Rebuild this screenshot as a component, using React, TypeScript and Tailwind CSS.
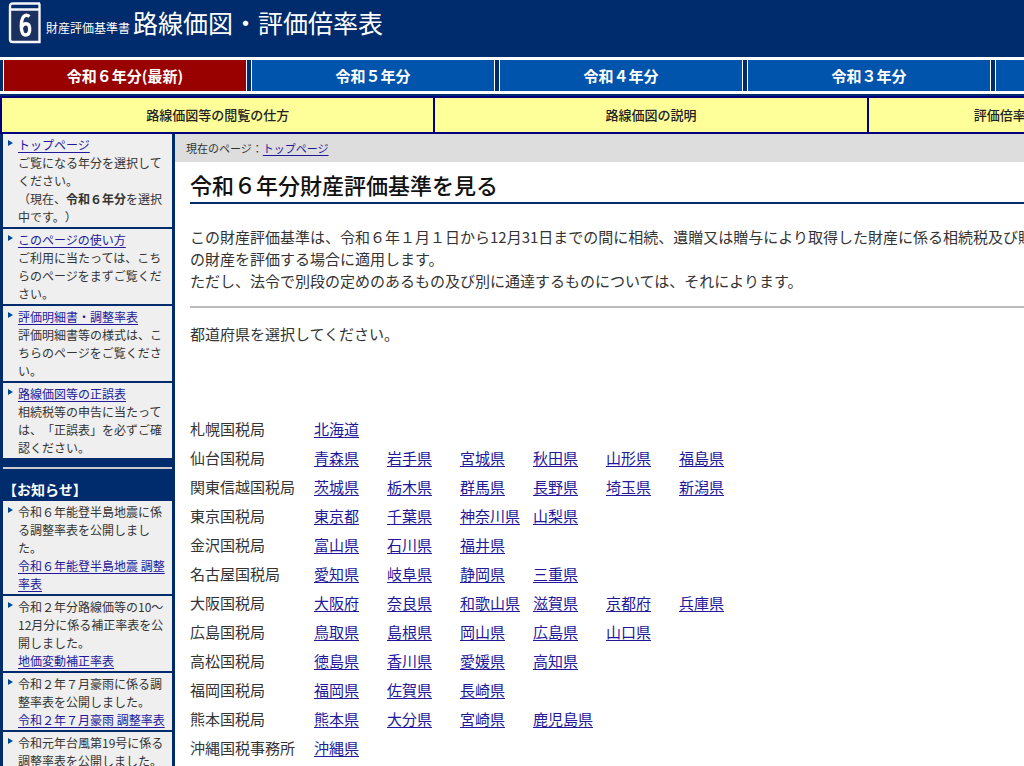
type SideItem = { link: string; before?: string; after?: React.ReactNode };

const years = ["令和６年分(最新)", "令和５年分", "令和４年分", "令和３年分", "令和２年分"];

const guides = ["路線価図等の閲覧の仕方", "路線価図の説明", "評価倍率表（一般の土地等用）の説明"];

const menu: SideItem[] = [
  {
    link: "トップページ",
    after: (
      <>
        ご覧になる年分を選択してください。
        <br />
        （現在、<b className="font-bold">令和６年分</b>を選択中です。）
      </>
    ),
  },
  { link: "このページの使い方", after: "ご利用に当たっては、こちらのページをまずご覧ください。" },
  { link: "評価明細書・調整率表", after: "評価明細書等の様式は、こちらのページをご覧ください。" },
  { link: "路線価図等の正誤表", after: "相続税等の申告に当たっては、「正誤表」を必ずご確認ください。" },
];

const news: SideItem[] = [
  { before: "令和６年能登半島地震に係る調整率表を公開しました。", link: "令和６年能登半島地震 調整率表" },
  { before: "令和２年分路線価等の10～12月分に係る補正率表を公開しました。", link: "地価変動補正率表" },
  { before: "令和２年７月豪雨に係る調整率表を公開しました。", link: "令和２年７月豪雨 調整率表" },
  { before: "令和元年台風第19号に係る調整率表を公開しました。", link: "令和元年台風第19号 調整率表" },
];

const bureaus: [string, string[]][] = [
  ["札幌国税局", ["北海道"]],
  ["仙台国税局", ["青森県", "岩手県", "宮城県", "秋田県", "山形県", "福島県"]],
  ["関東信越国税局", ["茨城県", "栃木県", "群馬県", "長野県", "埼玉県", "新潟県"]],
  ["東京国税局", ["東京都", "千葉県", "神奈川県", "山梨県"]],
  ["金沢国税局", ["富山県", "石川県", "福井県"]],
  ["名古屋国税局", ["愛知県", "岐阜県", "静岡県", "三重県"]],
  ["大阪国税局", ["大阪府", "奈良県", "和歌山県", "滋賀県", "京都府", "兵庫県"]],
  ["広島国税局", ["鳥取県", "島根県", "岡山県", "広島県", "山口県"]],
  ["高松国税局", ["徳島県", "香川県", "愛媛県", "高知県"]],
  ["福岡国税局", ["福岡県", "佐賀県", "長崎県"]],
  ["熊本国税局", ["熊本県", "大分県", "宮崎県", "鹿児島県"]],
  ["沖縄国税事務所", ["沖縄県"]],
];

function TextLink({ children }: { children: React.ReactNode }) {
  return (
    <a href="#" className="text-[#22189c] underline underline-offset-2">
      {children}
    </a>
  );
}

function BookIcon() {
  return (
    <svg width="34" height="42" viewBox="0 0 34 42" fill="none" aria-hidden="true">
      <path d="M2 8h29.500v31.500H4.500Q2 39.500 2 37z" fill="#1b315f" />
      <path
        d="M32 1.500H5Q2 1.500 2 4.500V37.500Q2 40 4.500 40H31.500V7.500H3M31.500 1.500V7.500"
        stroke="#f4f6fa"
        strokeWidth="2.400"
      />
      <path
        d="M21.500 14.500Q19.500 13 17.500 13.400Q13.500 14.600 13.300 23.500Q13.200 33 17.500 33Q21.700 33 21.700 27.300Q21.700 21.800 18 21.800Q15 21.800 13.600 25"
        stroke="#fff"
        strokeWidth="3.400"
      />
    </svg>
  );
}

function SideList({ items }: { items: SideItem[] }) {
  return (
    <ul className="flex flex-col gap-0.5">
      {items.map((item) => (
        <li key={item.link} className="flex gap-1 bg-[#efefef] pt-0.5 pr-1 pb-px pl-1 text-xs leading-[18px]">
          <svg width="7" height="8" viewBox="0 0 7 8" className="mt-[3px] shrink-0" aria-hidden="true">
            <path d="M1 1l5 3-5 3z" fill="#004a95" />
          </svg>
          <div className="min-w-0 flex-1">
            {item.before && <p className="pr-1">{item.before}</p>}
            <TextLink>{item.link}</TextLink>
            {item.after && <p className="pr-1">{item.after}</p>}
          </div>
        </li>
      ))}
    </ul>
  );
}

export default function App() {
  return (
    <div
      lang="ja"
      className="h-screen overflow-hidden bg-white font-['Noto_Sans_CJK_JP',sans-serif] text-[#333] [text-spacing-trim:space-all]"
    >
      <div className="flex min-h-full min-w-[1302px] flex-col">
        <header className="bg-[#002b6c] pb-0.5 text-white">
          <div className="flex h-[57px] items-start gap-1 pt-0.5 pl-2">
            <BookIcon />
            <h1 className="flex items-baseline gap-[3px] pt-0.5 text-[25px] leading-9">
              <span className="text-xs">財産評価基準書</span>
              路線価図・評価倍率表
            </h1>
          </div>
          <nav className="flex gap-1 overflow-hidden border-y-3 border-white pl-[3px]">
            {years.map((year, i) => (
              <a
                key={year}
                href="#"
                className={`w-[244px] shrink-0 border-x border-white text-center text-[15px] leading-[31px] font-bold ${
                  i === 0 ? "bg-[#990000]" : "bg-[#0054ac]"
                }`}
              >
                {year}
              </a>
            ))}
          </nav>
        </header>

        <nav className="grid grid-cols-3 gap-0.5 border-2 border-[#000080] bg-[#000080]">
          {guides.map((guide) => (
            <a
              key={guide}
              href="#"
              className="bg-[#ffff99] text-center text-[13px] leading-[34px] font-medium text-[#222]"
            >
              {guide}
            </a>
          ))}
        </nav>

        <div className="flex flex-1">
          <aside className="w-[175px] shrink-0 bg-[#002b6c] px-[3px]">
            <SideList items={menu} />
            <hr className="mt-[9px] border-t-2 border-[#ccc]" />
            <h2 className="mt-2 text-sm leading-6 font-bold text-white">【お知らせ】</h2>
            <SideList items={news} />
          </aside>

          <main className="flex-1 text-[15px] leading-[22px]">
            <div className="bg-[#ddd] pl-[11px] text-[11px] leading-7">
              現在のページ：<TextLink>トップページ</TextLink>
            </div>
            <div className="px-[15px] pt-1.5">
              <h2 className="border-b-2 border-[#002b6c] pb-0.5 text-[22px] leading-8 font-medium text-[#111]">
                令和６年分財産評価基準を見る
              </h2>
              <p className="pt-[22px] whitespace-nowrap">
                この財産評価基準は、令和６年１月１日から12月31日までの間に相続、遺贈又は贈与により取得した財産に係る相続税及び贈与税
                <br />
                の財産を評価する場合に適用します。
                <br />
                ただし、法令で別段の定めのあるもの及び別に通達するものについては、それによります。
              </p>
              <hr className="mt-3.5 border-t-2 border-[#bbb]" />
              <p className="pt-[15px]">都道府県を選択してください。</p>
              <table className="mt-[69px]">
                <tbody>
                  {bureaus.map(([bureau, prefs]) => (
                    <tr key={bureau} className="h-[29px]">
                      <th scope="row" className="w-[124px] text-left font-normal">
                        {bureau}
                      </th>
                      <td>
                        <ul className="flex">
                          {prefs.map((pref) => (
                            <li key={pref} className="w-[73px]">
                              <TextLink>{pref}</TextLink>
                            </li>
                          ))}
                        </ul>
                      </td>
                    </tr>
                  ))}
                </tbody>
              </table>
            </div>
          </main>
        </div>
      </div>
    </div>
  );
}
